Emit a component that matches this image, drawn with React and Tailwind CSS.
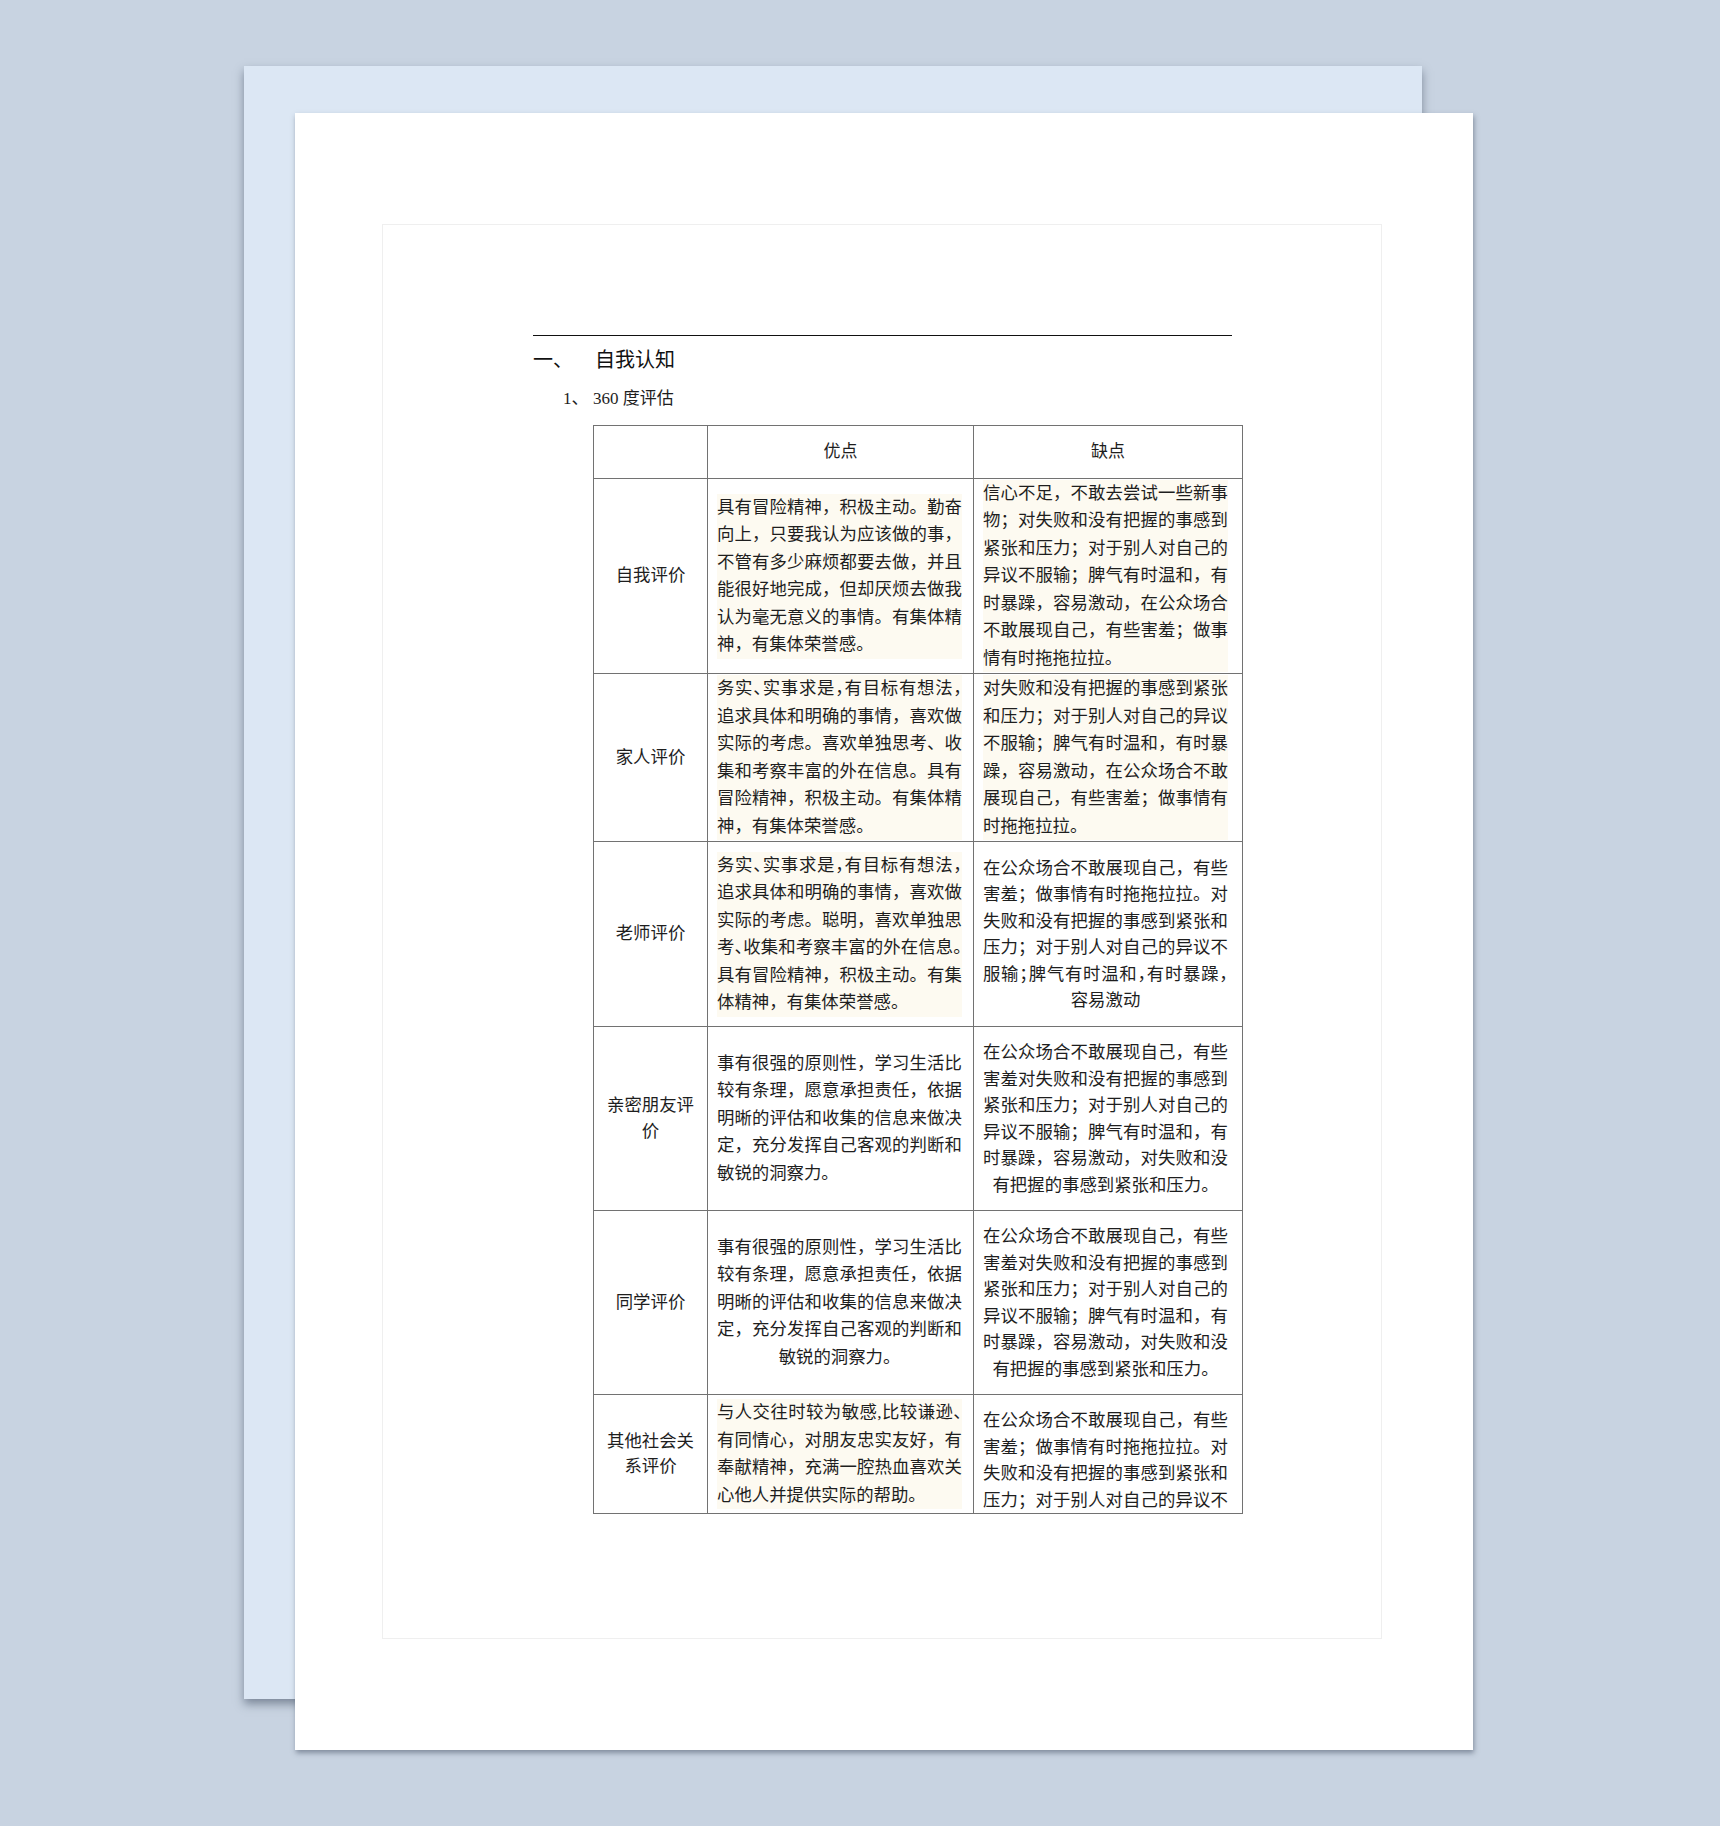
import React from "react";

const rows = [
  {
    label: ["自我评价"],
    h: "h-[195px]",
    pros: {
      cream: true,
      last: "left",
      lead: "leading-[27.5px]",
      lines: [
        "具有冒险精神，积极主动。勤奋",
        "向上，只要我认为应该做的事，",
        "不管有多少麻烦都要去做，并且",
        "能很好地完成，但却厌烦去做我",
        "认为毫无意义的事情。有集体精",
        "神，有集体荣誉感。",
      ],
    },
    cons: {
      cream: true,
      last: "left",
      lead: "leading-[27.5px]",
      lines: [
        "信心不足，不敢去尝试一些新事",
        "物；对失败和没有把握的事感到",
        "紧张和压力；对于别人对自己的",
        "异议不服输；脾气有时温和，有",
        "时暴躁，容易激动，在公众场合",
        "不敢展现自己，有些害羞；做事",
        "情有时拖拖拉拉。",
      ],
    },
  },
  {
    label: ["家人评价"],
    h: "h-[168px]",
    pros: {
      cream: true,
      last: "left",
      lead: "leading-[27.5px]",
      lines: [
        "务实、实事求是，有目标有想法，",
        "追求具体和明确的事情，喜欢做",
        "实际的考虑。喜欢单独思考、收",
        "集和考察丰富的外在信息。具有",
        "冒险精神，积极主动。有集体精",
        "神，有集体荣誉感。",
      ],
    },
    cons: {
      cream: true,
      last: "left",
      lead: "leading-[27.5px]",
      lines: [
        "对失败和没有把握的事感到紧张",
        "和压力；对于别人对自己的异议",
        "不服输；脾气有时温和，有时暴",
        "躁，容易激动，在公众场合不敢",
        "展现自己，有些害羞；做事情有",
        "时拖拖拉拉。",
      ],
    },
  },
  {
    label: ["老师评价"],
    h: "h-[185px]",
    pros: {
      cream: true,
      last: "left",
      lead: "leading-[27.5px]",
      lines: [
        "务实、实事求是，有目标有想法，",
        "追求具体和明确的事情，喜欢做",
        "实际的考虑。聪明，喜欢单独思",
        "考、收集和考察丰富的外在信息。",
        "具有冒险精神，积极主动。有集",
        "体精神，有集体荣誉感。",
      ],
    },
    cons: {
      cream: false,
      last: "center",
      lead: "leading-[26.5px]",
      lines: [
        "在公众场合不敢展现自己，有些",
        "害羞；做事情有时拖拖拉拉。对",
        "失败和没有把握的事感到紧张和",
        "压力；对于别人对自己的异议不",
        "服输；脾气有时温和，有时暴躁，",
        "容易激动",
      ],
    },
  },
  {
    label: ["亲密朋友评", "价"],
    h: "h-[184px]",
    pros: {
      cream: false,
      last: "left",
      lead: "leading-[27.5px]",
      lines: [
        "事有很强的原则性，学习生活比",
        "较有条理，愿意承担责任，依据",
        "明晰的评估和收集的信息来做决",
        "定，充分发挥自己客观的判断和",
        "敏锐的洞察力。",
      ],
    },
    cons: {
      cream: false,
      last: "center",
      lead: "leading-[26.5px]",
      lines: [
        "在公众场合不敢展现自己，有些",
        "害羞对失败和没有把握的事感到",
        "紧张和压力；对于别人对自己的",
        "异议不服输；脾气有时温和，有",
        "时暴躁，容易激动，对失败和没",
        "有把握的事感到紧张和压力。",
      ],
    },
  },
  {
    label: ["同学评价"],
    h: "h-[184px]",
    pros: {
      cream: false,
      last: "center",
      lead: "leading-[27.5px]",
      lines: [
        "事有很强的原则性，学习生活比",
        "较有条理，愿意承担责任，依据",
        "明晰的评估和收集的信息来做决",
        "定，充分发挥自己客观的判断和",
        "敏锐的洞察力。",
      ],
    },
    cons: {
      cream: false,
      last: "center",
      lead: "leading-[26.5px]",
      lines: [
        "在公众场合不敢展现自己，有些",
        "害羞对失败和没有把握的事感到",
        "紧张和压力；对于别人对自己的",
        "异议不服输；脾气有时温和，有",
        "时暴躁，容易激动，对失败和没",
        "有把握的事感到紧张和压力。",
      ],
    },
  },
  {
    label: ["其他社会关", "系评价"],
    h: "h-[119px]",
    pros: {
      cream: true,
      last: "left",
      lead: "leading-[27.5px]",
      lines: [
        "与人交往时较为敏感,比较谦逊、",
        "有同情心，对朋友忠实友好，有",
        "奉献精神，充满一腔热血喜欢关",
        "心他人并提供实际的帮助。",
      ],
    },
    cons: {
      cream: false,
      last: "justify",
      top: true,
      lead: "leading-[26.5px]",
      lines: [
        "在公众场合不敢展现自己，有些",
        "害羞；做事情有时拖拖拉拉。对",
        "失败和没有把握的事感到紧张和",
        "压力；对于别人对自己的异议不",
      ],
    },
  },
];

// width of a line in em: full-width glyphs count 1, ascii 0.5
const units = (s) =>
  [...s].reduce((a, c) => a + (c.charCodeAt(0) < 0x2000 ? 0.5 : 1), 0);

function Lines({ data }) {
  const { lines, last, lead, cream } = data;
  return (
    <div className={`w-[245px] ${lead} ${cream ? "bg-[#fdfaf1]" : ""}`}>
      {lines.map((t, i) => {
        const isLast = i === lines.length - 1;
        const tight = units(t) > 14 ? "[font-feature-settings:'halt']" : "";
        let align = "text-justify [text-align-last:justify]";
        if (isLast && last === "left") align = "text-left";
        if (isLast && last === "center") align = "text-center";
        return (
          <div key={i} className={`${align} ${tight}`}>
            {t}
          </div>
        );
      })}
    </div>
  );
}

function Row({ row }) {
  return (
    <div className={`flex ${row.h} border-b border-[#727272]`}>
      <div className="flex w-[114px] shrink-0 items-center justify-center border-r border-[#727272] px-2 text-center leading-[25.5px]">
        <div>
          {row.label.map((l, i) => (
            <div key={i}>{l}</div>
          ))}
        </div>
      </div>
      <div className="flex w-[266px] shrink-0 items-center border-r border-[#727272] pl-[9px] pr-[11px]">
        <Lines data={row.pros} />
      </div>
      <div
        className={`flex w-[269px] shrink-0 overflow-hidden border-r border-[#727272] pl-[9px] pr-[14px] ${
          row.cons.top ? "items-start pt-[12px]" : "items-center"
        }`}
      >
        <Lines data={row.cons} />
      </div>
    </div>
  );
}

export default function App() {
  return (
    <div className="min-h-[1826px] w-full overflow-hidden bg-[#c8d3e1] pl-[295px] pt-[113px]">
      <div className="relative h-[1637px] w-[1178px]">
        {/* page behind */}
        <div className="absolute left-[-51px] top-[-47px] h-[1633px] w-[1178px] bg-[#dce7f4] shadow-[0_5px_9px_rgba(60,72,92,0.55)]" />

        {/* front page */}
        <div className="relative h-full w-full bg-white pl-[87px] pt-[111px] shadow-[1px_3px_5px_rgba(60,72,92,0.5)]">
          <div className="h-[1415px] w-[1000px] border border-[#efefef] pl-[150px] pt-[110px] text-[#1e1e1e]">
            <div className="h-px w-[699px] bg-[#111]" />

            <div className="mt-[9px] flex text-[20px] leading-[28px] text-[#111] font-['Noto_Sans_CJK_SC',sans-serif]">
              <span className="w-[62px]">一、</span>
              <span>自我认知</span>
            </div>

            <div className="mt-[13px] flex pl-[30px] text-[17px] leading-[26px] font-['Liberation_Serif','Noto_Sans_CJK_SC',serif]">
              <span className="w-[30px]">1、</span>
              <span>360 度评估</span>
            </div>

            <div className="ml-[60px] mt-[13px] w-[650px] border-l border-t border-[#727272] text-[17.4px] font-['Liberation_Serif','Noto_Sans_CJK_SC',serif]">
              <div className="flex h-[53px] border-b border-[#727272] text-[17px]">
                <div className="w-[114px] shrink-0 border-r border-[#727272]" />
                <div className="flex w-[266px] shrink-0 items-center justify-center border-r border-[#727272]">
                  优点
                </div>
                <div className="flex w-[269px] shrink-0 items-center justify-center border-r border-[#727272]">
                  缺点
                </div>
              </div>
              {rows.map((r, i) => (
                <Row key={i} row={r} />
              ))}
            </div>
          </div>
        </div>
      </div>
    </div>
  );
}
